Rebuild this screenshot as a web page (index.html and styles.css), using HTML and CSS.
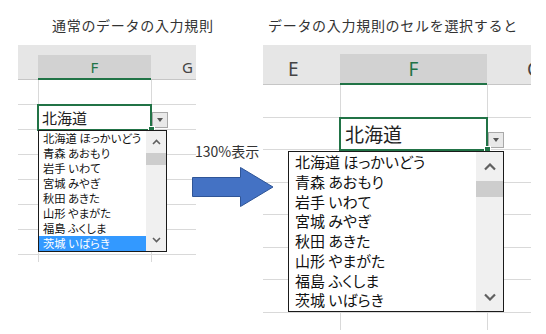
FILE: index.html
```html
<!DOCTYPE html>
<html lang="ja">
<head>
  <meta charset="UTF-8" />
  <title>入力規則 130%表示</title>
  <link rel="stylesheet" href="styles.css">
</head>
<body>
  <div class="page">
    <div class="titles">
      <p class="title title-left">通常のデータの入力規則</p>
      <p class="title title-right">データの入力規則のセルを選択すると</p>
    </div>

    <div class="sheets">
      <!-- 100% -->
      <div class="sheet sheet-small">
        <div class="band"></div>
        <div class="head">
          <div class="col-head"></div>
          <div class="col-head active-col">F</div>
          <div class="col-head g-head">G</div>
        </div>
        <div class="grid">
          <div class="c"></div><div class="c"></div><div class="c"></div>
          <div class="c"></div><div class="c active">北海道</div><div class="c btn-cell"><span class="dd-btn"></span></div>
          <div class="c"></div><div class="c"></div><div class="c"></div>
          <div class="c"></div><div class="c"></div><div class="c"></div>
          <div class="c"></div><div class="c"></div><div class="c"></div>
          <div class="c"></div><div class="c"></div><div class="c"></div>
          <div class="c"></div><div class="c"></div><div class="c"></div>
          <div class="c"></div><div class="c"></div><div class="c"></div>
        </div>
        <div class="list">
          <div class="items">
            <div class="item">北海道 ほっかいどう</div>
            <div class="item">青森 あおもり</div>
            <div class="item">岩手 いわて</div>
            <div class="item">宮城 みやぎ</div>
            <div class="item">秋田 あきた</div>
            <div class="item">山形 やまがた</div>
            <div class="item">福島 ふくしま</div>
            <div class="item selected">茨城 いばらき</div>
          </div>
          <div class="scroll">
            <div class="scroll-btn up"><svg width="9" height="6" viewBox="0 0 9 6"><polyline points="1,5 4.5,1.5 8,5" fill="none" stroke="#606060" stroke-width="1.6"/></svg></div>
            <div class="thumb"></div>
            <div class="spacer"></div>
            <div class="scroll-btn down"><svg width="9" height="6" viewBox="0 0 9 6"><polyline points="1,1 4.5,4.5 8,1" fill="none" stroke="#606060" stroke-width="1.6"/></svg></div>
          </div>
        </div>
      </div>

      <div class="callout">
        <span class="zoom-label">130%表示</span>
        <svg class="arrow" width="82" height="40" viewBox="0 0 82 40">
          <polygon points="0.5,10.5 48.5,10.5 48.5,0.5 81,20 48.5,39.5 48.5,29.5 0.5,29.5" fill="#4472c4" stroke="#2f5597" stroke-width="1"/>
        </svg>
      </div>

      <!-- 130% -->
      <div class="sheet sheet-big">
        <div class="band"></div>
        <div class="head">
          <div class="col-head e-head">E</div>
          <div class="col-head active-col">F</div>
          <div class="col-head g-head">G</div>
        </div>
        <div class="grid">
          <div class="c"></div><div class="c"></div><div class="c"></div>
          <div class="c"></div><div class="c active">北海道</div><div class="c btn-cell"><span class="dd-btn"></span></div>
          <div class="c"></div><div class="c"></div><div class="c"></div>
          <div class="c"></div><div class="c"></div><div class="c"></div>
          <div class="c"></div><div class="c"></div><div class="c"></div>
          <div class="c"></div><div class="c"></div><div class="c"></div>
          <div class="c"></div><div class="c"></div><div class="c"></div>
          <div class="c"></div><div class="c"></div><div class="c"></div>
        </div>
        <div class="list">
          <div class="items">
            <div class="item">北海道 ほっかいどう</div>
            <div class="item">青森 あおもり</div>
            <div class="item">岩手 いわて</div>
            <div class="item">宮城 みやぎ</div>
            <div class="item">秋田 あきた</div>
            <div class="item">山形 やまがた</div>
            <div class="item">福島 ふくしま</div>
            <div class="item">茨城 いばらき</div>
          </div>
          <div class="scroll">
            <div class="scroll-btn up"><svg width="12" height="8" viewBox="0 0 12 8"><polyline points="1,6.5 6,1.5 11,6.5" fill="none" stroke="#606060" stroke-width="2.2"/></svg></div>
            <div class="thumb"></div>
            <div class="spacer"></div>
            <div class="scroll-btn down"><svg width="12" height="8" viewBox="0 0 12 8"><polyline points="1,1.5 6,6.5 11,1.5" fill="none" stroke="#606060" stroke-width="2.2"/></svg></div>
          </div>
        </div>
      </div>
    </div>
  </div>
</body>
</html>
```
FILE: styles.css
```css
body {
  margin: 0;
  font-family: "Noto Sans CJK JP", "Noto Sans", sans-serif;
  color: #333;
  background: #fff;
}

.page {
  width: 546px;
  height: 334px;
  overflow: hidden;
}

.titles {
  display: grid;
  grid-template-columns: 240px 1fr;
  padding-top: 15px;
}

.title {
  margin: 0;
  font-size: 14px;
  line-height: 20px;
  letter-spacing: 0.7px;
  color: #333;
  white-space: nowrap;
}

.title-left {
  padding-left: 52px;
}

.title-right {
  padding-left: 28px;
}

.sheets {
  display: flex;
  align-items: flex-start;
  margin-top: 10px;
}

.sheet {
  position: relative;
}

.sheet-small {
  width: 178px;
  margin-left: 18px;
}

.sheet-big {
  width: 268px;
}

/* column header */
.band {
  background: #e6e6e6;
}

.sheet-small .band {
  height: 10px;
}

.sheet-big .band {
  height: 9px;
}

.head {
  display: grid;
  background: #e6e6e6;
  font-family: "Noto Sans", sans-serif;
  color: #444;
}

.sheet-small .head {
  grid-template-columns: 20px 113px 45px;
  height: 25px;
  font-size: 15px;
}

.sheet-big .head {
  grid-template-columns: 77px 147px 44px;
  height: 31px;
  font-size: 19px;
}

.col-head {
  box-sizing: border-box;
  border-bottom: 1px solid #c6c6c6;
  display: flex;
  align-items: center;
  overflow: hidden;
  white-space: nowrap;
}

.col-head.active-col {
  background: #d2d2d2;
  border-bottom: 2px solid #217346;
  color: #217346;
  justify-content: center;
}

.sheet-small .g-head {
  padding-left: 31px;
}

.sheet-big .e-head {
  padding-left: 25px;
}

.sheet-big .g-head {
  padding-left: 40px;
}

/* cells */
.grid {
  display: grid;
  overflow: hidden;
}

.sheet-small .grid {
  grid-template-columns: 20px 113px 45px;
  grid-auto-rows: 25px;
  height: 182px;
}

.sheet-big .grid {
  grid-template-columns: 77px 147px 44px;
  grid-auto-rows: 32.5px;
  height: 245px;
}

.c {
  box-sizing: border-box;
  border-bottom: 1px solid #d9d9d9;
}

.c:nth-child(3n+2),
.c:nth-child(3n) {
  border-left: 1px solid #d9d9d9;
}

.c.active {
  position: relative;
  z-index: 1;
  display: flex;
  align-items: center;
  padding-left: 3px;
  outline: 2px solid #217346;
  outline-offset: -1px;
  color: #222;
  white-space: nowrap;
}

.sheet-small .c.active {
  font-size: 15px;
}

.sheet-big .c.active {
  font-size: 19px;
  padding-left: 4px;
}

.c.active::after {
  content: "";
  position: absolute;
  right: -4px;
  bottom: -4px;
  width: 5px;
  height: 5px;
  background: #217346;
  border: 1px solid #fff;
}

.c.btn-cell {
  display: flex;
  align-items: flex-end;
  padding-bottom: 1px;
}

.dd-btn {
  width: 16px;
  height: 16px;
  box-sizing: border-box;
  border: 1px solid #a9a9a9;
  background: #e9e9e9;
  display: flex;
  align-items: center;
  justify-content: center;
}

.dd-btn::before {
  content: "";
  border-left: 3.5px solid transparent;
  border-right: 3.5px solid transparent;
  border-top: 4px solid #555;
}

/* dropdown list */
.list {
  position: absolute;
  z-index: 2;
  display: flex;
  box-sizing: border-box;
  border: 1px solid #1a1a1a;
  background: #fff;
  overflow: hidden;
  color: #111;
  font-feature-settings: "palt";
}

.sheet-small .list {
  left: 20px;
  top: 85px;
  width: 129px;
  height: 122px;
  font-size: 11.3px;
  line-height: 15px;
}

.sheet-big .list {
  left: 25px;
  top: 106px;
  width: 216px;
  height: 161px;
  font-size: 15px;
  line-height: 19.75px;
}

.items {
  flex: 1;
  overflow: hidden;
}

.item {
  padding-left: 4px;
  white-space: nowrap;
}

.sheet-big .item {
  padding-left: 6px;
}

.item.selected {
  background: #3399ff;
  color: #fff;
}

.scroll {
  display: flex;
  flex-direction: column;
  background: #f0f0f0;
}

.sheet-small .scroll {
  width: 20px;
}

.sheet-big .scroll {
  width: 27px;
}

.scroll-btn {
  display: flex;
  align-items: center;
  justify-content: center;
}

.sheet-small .scroll-btn {
  height: 22px;
}

.sheet-big .scroll-btn.up {
  height: 29px;
}

.sheet-big .scroll-btn.down {
  height: 28px;
}

.thumb {
  background: #cdcdcd;
}

.sheet-small .thumb {
  height: 12px;
}

.sheet-big .thumb {
  height: 16px;
}

.spacer {
  flex: 1;
}

/* 130% arrow */
.callout {
  position: relative;
  z-index: 3;
  width: 81px;
  margin-left: -4px;
  margin-right: -10px;
  display: flex;
  flex-direction: column;
  align-items: flex-start;
}

.zoom-label {
  margin-top: 98px;
  margin-left: 3px;
  font-size: 14px;
  line-height: 16px;
  color: #333;
  white-space: nowrap;
}

.arrow {
  display: block;
  margin-top: 8px;
}
```
